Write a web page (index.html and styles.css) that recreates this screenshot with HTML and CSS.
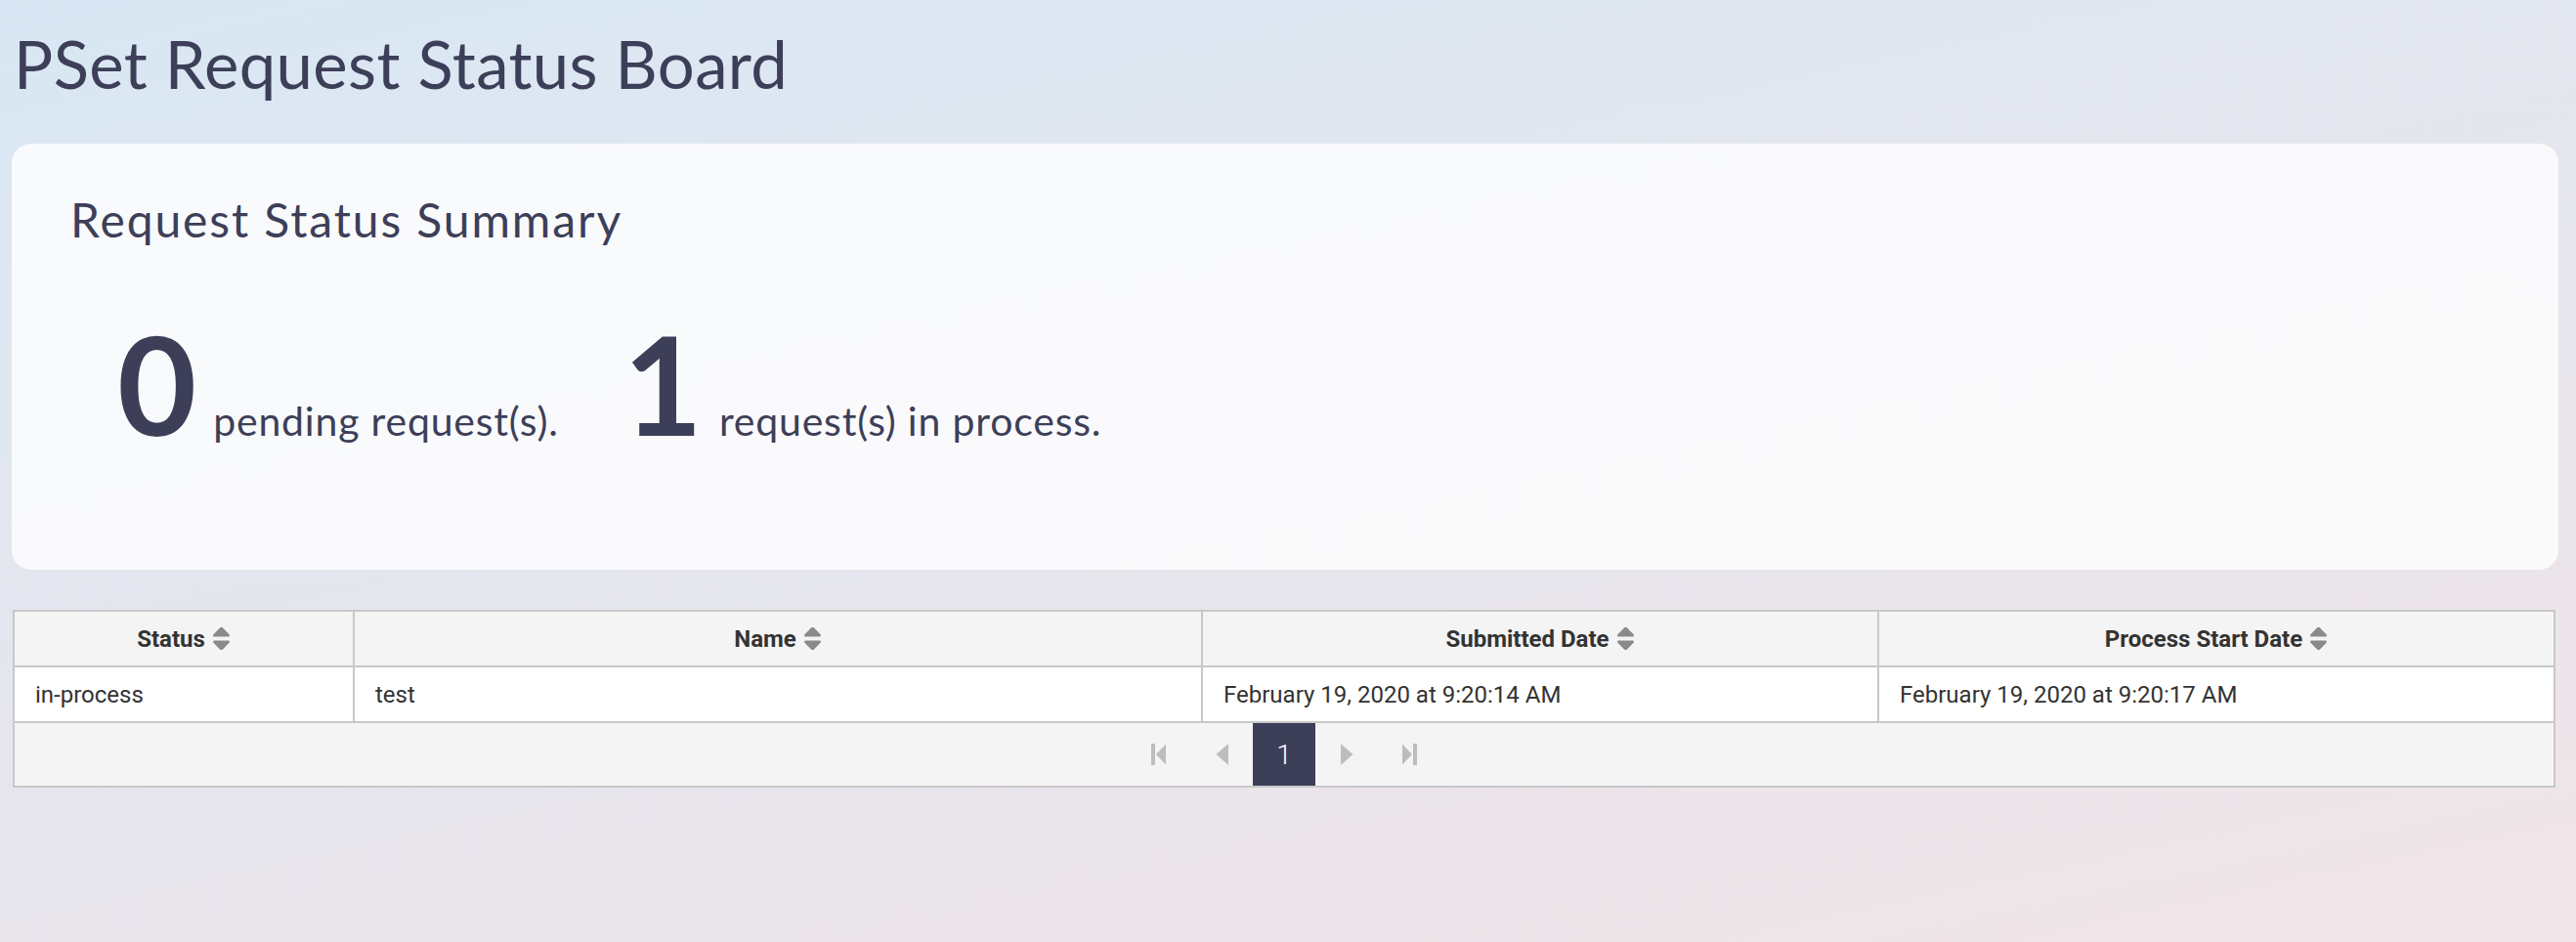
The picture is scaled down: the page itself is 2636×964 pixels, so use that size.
FILE: index.html
```html
<!DOCTYPE html>
<html lang="en">
<head>
<meta charset="utf-8">
<title>PSet Request Status Board</title>
<link rel="stylesheet" href="styles.css">
</head>
<body>
<div class="page">
  <h1 class="title">PSet Request Status Board</h1>

  <section class="card">
    <h2 class="card-title">Request Status Summary</h2>
    <div class="stats">
      <div class="stat">
        <span class="stat-num">0</span>
        <span class="stat-label">pending request(s).</span>
      </div>
      <div class="stat">
        <span class="stat-num">1</span>
        <span class="stat-label">request(s) in process.</span>
      </div>
    </div>
  </section>

  <div class="table">
    <div class="row head">
      <div class="cell th">Status <svg class="sort" viewBox="0 64 320 384"><path d="M41 288h238c21.4 0 32.1 25.9 17 41L177 448c-9.4 9.4-24.6 9.4-33.9 0L24 329c-15.1-15.1-4.4-41 17-41zm255-105L177 64c-9.4-9.4-24.6-9.4-33.9 0L24 183c-15.1 15.1-4.4 41 17 41h238c21.4 0 32.1-25.9 17-41z"/></svg></div>
      <div class="cell th">Name <svg class="sort" viewBox="0 64 320 384"><path d="M41 288h238c21.4 0 32.1 25.9 17 41L177 448c-9.4 9.4-24.6 9.4-33.9 0L24 329c-15.1-15.1-4.4-41 17-41zm255-105L177 64c-9.4-9.4-24.6-9.4-33.9 0L24 183c-15.1 15.1-4.4 41 17 41h238c21.4 0 32.1-25.9 17-41z"/></svg></div>
      <div class="cell th">Submitted Date <svg class="sort" viewBox="0 64 320 384"><path d="M41 288h238c21.4 0 32.1 25.9 17 41L177 448c-9.4 9.4-24.6 9.4-33.9 0L24 329c-15.1-15.1-4.4-41 17-41zm255-105L177 64c-9.4-9.4-24.6-9.4-33.9 0L24 183c-15.1 15.1-4.4 41 17 41h238c21.4 0 32.1-25.9 17-41z"/></svg></div>
      <div class="cell th">Process Start Date <svg class="sort" viewBox="0 64 320 384"><path d="M41 288h238c21.4 0 32.1 25.9 17 41L177 448c-9.4 9.4-24.6 9.4-33.9 0L24 329c-15.1-15.1-4.4-41 17-41zm255-105L177 64c-9.4-9.4-24.6-9.4-33.9 0L24 183c-15.1 15.1-4.4 41 17 41h238c21.4 0 32.1-25.9 17-41z"/></svg></div>
    </div>
    <div class="row body">
      <div class="cell td">in-process</div>
      <div class="cell td">test</div>
      <div class="cell td">February 19, 2020 at 9:20:14 AM</div>
      <div class="cell td">February 19, 2020 at 9:20:17 AM</div>
    </div>
    <div class="pager">
      <span class="pg"><svg class="pg-icon wide" viewBox="0 0 16 22"><rect x="0" y="0" width="4" height="22"/><path d="M15 0.5 L15 21.5 L5 11 Z"/></svg></span>
      <span class="pg"><svg class="pg-icon narrow" viewBox="0 0 13 22"><path d="M13 0 L13 22 L0.5 11 Z"/></svg></span>
      <span class="pg active">1</span>
      <span class="pg"><svg class="pg-icon narrow" viewBox="0 0 13 22"><path d="M0 0 L0 22 L12.5 11 Z"/></svg></span>
      <span class="pg"><svg class="pg-icon wide" viewBox="0 0 16 22"><path d="M1 0.5 L1 21.5 L11 11 Z"/><rect x="12" y="0" width="4" height="22"/></svg></span>
    </div>
  </div>
</div>
</body>
</html>
```

FILE: styles.css
```css
html, body {
  margin: 0;
  padding: 0;
  height: 100%;
}

body {
  background: linear-gradient(168deg, #d8e7f4 0%, #e1e7f0 30%, #e8e5ec 62%, #f1e5e8 100%);
  color: #3d3f58;
  font-family: "Lato", "Open Sans", sans-serif;
  min-height: 964px;
}

.page {
  padding: 25px 18px 0 12px;
}

.title {
  margin: 0 0 42px 0;
  padding-left: 2px;
  font-size: 67px;
  line-height: 80px;
  font-weight: 400;
  letter-spacing: 0.4px;
  color: #3d3f58;
}

.card {
  background: rgba(255, 255, 255, 0.8);
  border-radius: 20px;
  height: 436px;
  box-sizing: border-box;
  padding: 50px 60px 0 60px;
}

.card-title {
  margin: 0;
  font-size: 48px;
  line-height: 56px;
  font-weight: 400;
  letter-spacing: 1.9px;
  color: #3d3f58;
}

.stats {
  display: flex;
  align-items: baseline;
  margin-top: 69px;
  padding-left: 48px;
}

.stat {
  display: flex;
  align-items: baseline;
  margin-right: 66px;
}

.stat-num {
  font-size: 140px;
  line-height: 140px;
  font-weight: 700;
  margin-right: 17px;
}

.stat-label {
  font-size: 41px;
  font-weight: 400;
  letter-spacing: 0.8px;
}

.table {
  margin: 41px 3px 0 1px;
  border: 2px solid #c8c8c8;
  font-family: "Roboto", "Liberation Sans", sans-serif;
  color: #333;
}

.row {
  display: grid;
  grid-template-columns: 348fr 868fr 692fr 690fr;
  border-bottom: 2px solid #c8c8c8;
}

.head {
  background: #f4f4f4;
  height: 57px;
  box-sizing: border-box;
}

.body {
  background: #ffffff;
  height: 57px;
  box-sizing: border-box;
}

.cell {
  display: flex;
  align-items: center;
  font-size: 24px;
  border-right: 2px solid #c8c8c8;
  box-sizing: border-box;
  min-width: 0;
}

.cell:last-child {
  border-right: none;
}

.th {
  justify-content: center;
  font-weight: 700;
}

.td {
  padding-left: 21px;
  font-weight: 400;
}

.sort {
  width: 19px;
  height: 23px;
  margin-left: 7px;
  fill: #8a8a8a;
}

.pager {
  display: flex;
  justify-content: center;
  background: #f4f4f4;
  height: 64px;
}

.pg {
  width: 64px;
  height: 64px;
  display: flex;
  align-items: center;
  justify-content: center;
}

.pg-icon {
  height: 22px;
  fill: #bdbdbd;
}

.pg-icon.wide {
  width: 16px;
}

.pg-icon.narrow {
  width: 13px;
}

.active {
  background: #3d3f58;
  color: #ffffff;
  font-family: "Roboto", sans-serif;
  font-weight: 300;
  font-size: 28px;
}
```
